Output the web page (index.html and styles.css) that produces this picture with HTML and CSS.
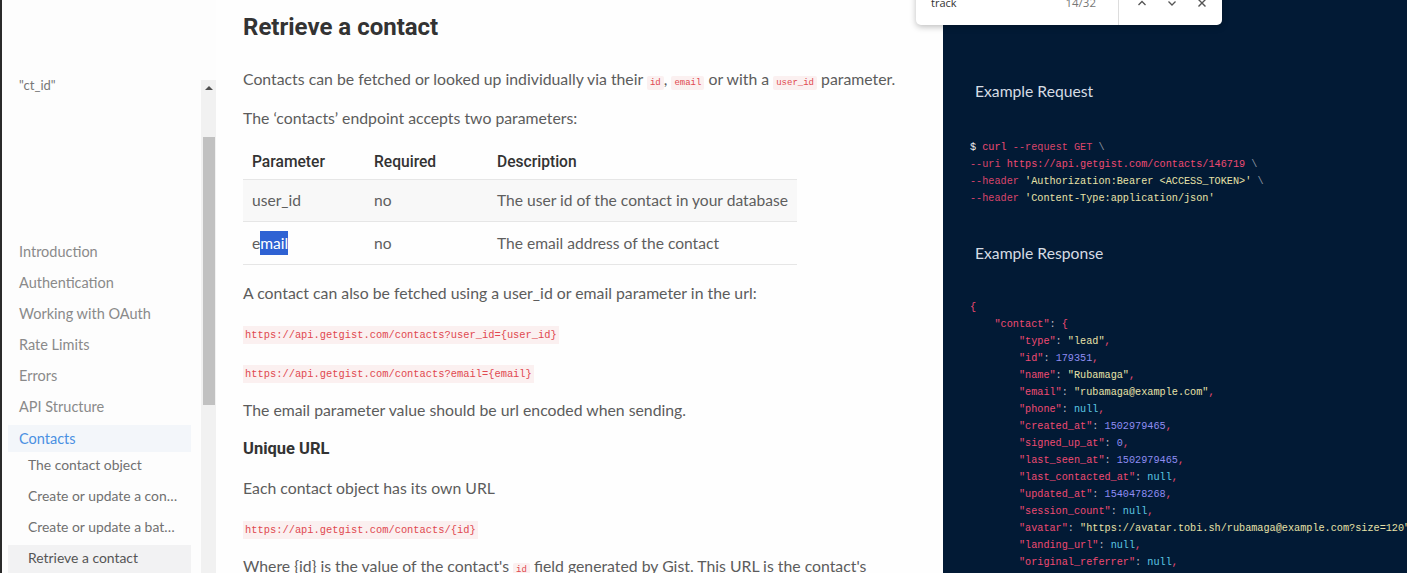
FILE: index.html
```html
<!DOCTYPE html>
<html lang="en">
<head>
<meta charset="utf-8">
<title>Retrieve a contact</title>
<link rel="stylesheet" href="styles.css">
</head>
<body>
<div class="page">
  <aside class="sidebar">
    <div class="nav-scroll">
      <div class="nav-list">
        <div class="stray">"ct_id"</div>
        <ul class="nav">
          <li class="nav-item">Introduction</li>
          <li class="nav-item">Authentication</li>
          <li class="nav-item">Working with OAuth</li>
          <li class="nav-item">Rate Limits</li>
          <li class="nav-item">Errors</li>
          <li class="nav-item">API Structure</li>
          <li class="nav-item nav-active">Contacts</li>
          <li class="nav-sub">The contact object</li>
          <li class="nav-sub">Create or update a con…</li>
          <li class="nav-sub">Create or update a bat…</li>
          <li class="nav-sub nav-current">Retrieve a contact</li>
        </ul>
      </div>
      <div class="scrollbar">
        <div class="scroll-btn"><span class="scroll-arrow"></span></div>
        <div class="scroll-thumb"></div>
      </div>
    </div>
  </aside>

  <main class="content">
    <h2 class="title">Retrieve a contact</h2>
    <p>Contacts can be fetched or looked up individually via their <code class="ic">id</code>, <code class="ic">email</code> or with a <code class="ic">user_id</code> parameter.</p>
    <p>The ‘contacts’ endpoint accepts two parameters:</p>
    <table class="params">
      <thead>
        <tr><th class="c1">Parameter</th><th class="c2">Required</th><th>Description</th></tr>
      </thead>
      <tbody>
        <tr class="shade"><td>user_id</td><td>no</td><td>The user id of the contact in your database</td></tr>
        <tr><td>e<span class="sel">mail</span></td><td>no</td><td>The email address of the contact</td></tr>
      </tbody>
    </table>
    <p>A contact can also be fetched using a user_id or email parameter in the url:</p>
    <p><code class="url">https://api.getgist.com/contacts?user_id={user_id}</code></p>
    <p><code class="url">https://api.getgist.com/contacts?email={email}</code></p>
    <p>The email parameter value should be url encoded when sending.</p>
    <h3 class="sub">Unique URL</h3>
    <p>Each contact object has its own URL</p>
    <p><code class="url">https://api.getgist.com/contacts/{id}</code></p>
    <p>Where {id} is the value of the contact's <code class="ic">id</code> field generated by Gist. This URL is the contact's</p>
  </main>

  <section class="examples">
    <h4 class="ex-title">Example Request</h4>
<pre class="code req"><span class="w">$</span> <span class="k">curl</span> <span class="k2">--request GET</span> <span class="g">\</span>
<span class="k2">--uri</span> <span class="k">https://api.getgist.com/contacts/146719</span> <span class="g">\</span>
<span class="k2">--header</span> <span class="s">'Authorization:Bearer &lt;ACCESS_TOKEN&gt;'</span> <span class="g">\</span>
<span class="k2">--header</span> <span class="s">'Content-Type:application/json'</span></pre>
    <h4 class="ex-title resp-title">Example Response</h4>
<pre class="code resp"><span class="k">{</span>
    <span class="k">"contact"</span><span class="p">: </span><span class="k">{</span>
        <span class="k">"type"</span><span class="p">: </span><span class="s">"lead"</span><span class="k">,</span>
        <span class="k">"id"</span><span class="p">: </span><span class="n">179351</span><span class="k">,</span>
        <span class="k">"name"</span><span class="p">: </span><span class="s">"Rubamaga"</span><span class="k">,</span>
        <span class="k">"email"</span><span class="p">: </span><span class="s">"rubamaga@example.com"</span><span class="k">,</span>
        <span class="k">"phone"</span><span class="p">: </span><span class="nl">null</span><span class="k">,</span>
        <span class="k">"created_at"</span><span class="p">: </span><span class="n">1502979465</span><span class="k">,</span>
        <span class="k">"signed_up_at"</span><span class="p">: </span><span class="n">0</span><span class="k">,</span>
        <span class="k">"last_seen_at"</span><span class="p">: </span><span class="n">1502979465</span><span class="k">,</span>
        <span class="k">"last_contacted_at"</span><span class="p">: </span><span class="nl">null</span><span class="k">,</span>
        <span class="k">"updated_at"</span><span class="p">: </span><span class="n">1540478268</span><span class="k">,</span>
        <span class="k">"session_count"</span><span class="p">: </span><span class="nl">null</span><span class="k">,</span>
        <span class="k">"avatar"</span><span class="p">: </span><span class="s">"https://avatar.tobi.sh/rubamaga@example.com?size=120"</span><span class="k">,</span>
        <span class="k">"landing_url"</span><span class="p">: </span><span class="nl">null</span><span class="k">,</span>
        <span class="k">"original_referrer"</span><span class="p">: </span><span class="nl">null</span><span class="k">,</span></pre>
  </section>

  <div class="findbar">
    <span class="find-text">track</span>
    <span class="find-count">14/32</span>
    <span class="find-div"></span>
    <span class="find-btns">
      <svg class="fi" viewBox="0 0 12 12" width="12" height="12"><path d="M2.5 8 L6 4.5 L9.5 8" fill="none" stroke="#555" stroke-width="1.3"/></svg>
      <svg class="fi" viewBox="0 0 12 12" width="12" height="12"><path d="M2.5 4.5 L6 8 L9.5 4.5" fill="none" stroke="#555" stroke-width="1.3"/></svg>
      <svg class="fi" viewBox="0 0 12 12" width="12" height="12"><path d="M2.5 2.5 L9.5 9.5 M9.5 2.5 L2.5 9.5" fill="none" stroke="#555" stroke-width="1.4"/></svg>
    </span>
  </div>
</div>
</body>
</html>
```

FILE: styles.css
```css
* { box-sizing: border-box; }
html, body { margin: 0; padding: 0; }
body {
  width: 1407px;
  height: 573px;
  overflow: hidden;
  background: #fdfdfd;
  font-family: Lato, "Open Sans", sans-serif;
}
.page {
  position: relative;
  display: flex;
  height: 573px;
  border-left: 2px solid #2a2a2a;
}

/* Sidebar */
.sidebar {
  width: 214px;
  flex: none;
  padding-top: 77px;
  background: #fdfdfd;
}
.nav-scroll {
  display: flex;
  height: 496px;
}
.nav-list {
  width: 199px;
  flex: none;
}
.stray {
  padding-left: 17px;
  font-size: 13px;
  line-height: 16px;
  color: #777;
}
.nav {
  list-style: none;
  margin: 142.5px 0 0 6px;
  padding: 0;
  width: 183px;
}
.nav-item {
  height: 31.2px;
  line-height: 31.2px;
  padding-left: 11px;
  font-size: 14.5px;
  color: #8a8a8a;
  white-space: nowrap;
}
.nav-active {
  height: 27px;
  line-height: 27px;
  margin-top: 2px;
  color: #4a90e2;
  background: #f3f6fa;
}
.nav-sub {
  height: 31px;
  line-height: 25px;
  padding-left: 20px;
  font-size: 13.9px;
  color: #707070;
  white-space: nowrap;
}
.nav-current {
  line-height: 25px;
  background: #f2f2f3;
  color: #555;
}
.scrollbar {
  width: 15px;
  flex: none;
  margin-top: 3px;
  background: #f1f1f1;
  display: flex;
  flex-direction: column;
}
.scroll-btn {
  height: 16px;
  display: flex;
  align-items: center;
  justify-content: center;
}
.scroll-arrow {
  width: 0;
  height: 0;
  border-left: 4px solid transparent;
  border-right: 4px solid transparent;
  border-bottom: 4px solid #505050;
}
.scroll-thumb {
  margin: 41px 1px 0 2px;
  height: 268px;
  background: #c1c1c1;
}

/* Main content */
.content {
  width: 727px;
  flex: none;
  padding: 12px 0 0 27px;
  background: #fefefe;
  color: #5c5c5c;
}
.title {
  margin: 0 0 25px;
  font-family: Roboto, "Liberation Sans", sans-serif;
  font-weight: 700;
  font-size: 24px;
  line-height: 30px;
  color: #333;
}
.content p {
  margin: 0 0 15px;
  height: 24px;
  font-size: 15.8px;
  line-height: 24px;
  white-space: nowrap;
}
.sub {
  margin: 0 0 15px;
  height: 24px;
  font-family: Roboto, "Liberation Sans", sans-serif;
  font-weight: 700;
  font-size: 16.5px;
  line-height: 24px;
  color: #333;
}
.ic {
  font-family: "Liberation Mono", monospace;
  font-size: 9px;
  line-height: 1;
  color: #e0484f;
  background: #fbf0f0;
  padding: 2px 3px;
  border-radius: 2px;
}
.url {
  font-family: "Liberation Mono", monospace;
  font-size: 10.4px;
  line-height: 1;
  color: #e0484f;
  background: #fbf0f0;
  padding: 3px 2px;
}
.params {
  border-collapse: collapse;
  width: 554px;
  margin: 1px 0 16px;
  font-size: 15.6px;
}
.params th {
  height: 34px;
  padding: 0 0 0 9px;
  text-align: left;
  font-family: Roboto, "Liberation Sans", sans-serif;
  font-weight: 500;
  font-size: 15.6px;
  color: #333;
  border-bottom: 1px solid #e6e6e6;
}
.params .c1 { width: 122px; }
.params .c2 { width: 123px; }
.params td {
  height: 43px;
  padding: 0 0 0 9px;
  color: #5e5e5e;
  border-bottom: 1px solid #e6e6e6;
  white-space: nowrap;
}
.params tbody tr:first-child td { height: 42px; }
.shade td { background: #f8f8f8; }
.sel {
  background: #2f62d3;
  color: #fff;
  padding: 3px 0;
}

/* Examples panel */
.examples {
  flex: 1;
  background: #021a35;
  padding: 81px 0 0 27px;
  overflow: hidden;
}
.ex-title {
  margin: 0 0 0 5px;
  font-family: Lato, sans-serif;
  font-weight: 400;
  font-size: 15.7px;
  line-height: 20px;
  color: #d6dce4;
}
.code {
  margin: 0;
  font-family: "Liberation Mono", monospace;
  font-size: 10.2px;
  line-height: 17px;
  white-space: pre;
  color: #ddd;
}
.req { margin-top: 38px; }
.resp-title { margin-top: 36px; }
.resp { margin-top: 36px; }
.w { color: #f2f2f2; }
.k { color: #ee4a72; }
.k2 { color: #d9456b; }
.g { color: #8a93a0; }
.s { color: #e8e2a8; }
.n { color: #8f8df2; }
.nl { color: #5cc8e4; }
.p { color: #b9b9c4; }

/* Find bar overlay */
.findbar {
  position: absolute;
  left: 914px;
  top: -12px;
  width: 306px;
  height: 37px;
  padding: 0 14px 8px 15px;
  display: flex;
  align-items: center;
  background: #fff;
  border-radius: 0 0 5px 5px;
  box-shadow: 0 2px 6px rgba(0,0,0,0.25);
  font-family: "Open Sans", sans-serif;
  font-size: 11px;
}
.find-text { color: #333; flex: 1; }
.find-count { color: #777; margin-right: 22px; font-size: 11.5px; }
.find-div {
  align-self: stretch;
  width: 1px;
  margin-bottom: -8px;
  background: #ddd;
}
.find-btns {
  display: flex;
  gap: 18px;
  margin-left: 17px;
}
.fi { display: block; }
```
